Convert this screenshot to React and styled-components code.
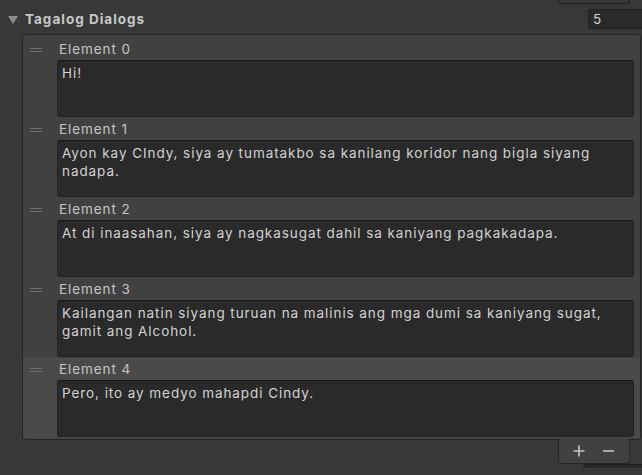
import styled, { createGlobalStyle } from "styled-components";

const GlobalStyle = createGlobalStyle`
  html, body {
    margin: 0;
    padding: 0;
    background: #383838;
    overflow: hidden;
  }
  body {
    font-family: Inter, "Noto Sans", sans-serif;
    font-size: 13.5px;
    letter-spacing: 0.93px;
    color: #d2d2d2;
  }
`;

const Page = styled.div`
  width: 642px;
  height: 475px;
  display: flex;
  flex-direction: column;
`;

const EdgeField = styled.div`
  align-self: flex-start;
  margin-left: ${(p) => p.left}px;
  width: ${(p) => p.width}px;
  height: 3px;
  border: 1px solid #212121;
  border-top: ${(p) => (p.top ? "1px solid #212121" : "none")};
  border-bottom: ${(p) => (p.top ? "none" : "1px solid #212121")};
  border-radius: ${(p) => (p.top ? "3px 3px 0 0" : "0 0 3px 3px")};
  background: ${(p) => (p.top ? "#2a2a2a" : "#383838")};
`;

const Header = styled.div`
  display: flex;
  align-items: center;
  height: 22px;
  margin-top: 4px;
  padding-left: 8px;
`;

const Foldout = styled.span`
  width: 0;
  height: 0;
  border-left: 5px solid transparent;
  border-right: 5px solid transparent;
  border-top: 8px solid #8d8d8d;
  margin-right: 7px;
  margin-top: 1px;
`;

const Title = styled.span`
  font-weight: 700;
  color: #c8c8c8;
  letter-spacing: 1px;
  flex: 1;
`;

const CountField = styled.div`
  width: 54px;
  height: 20px;
  box-sizing: border-box;
  background: #2a2a2a;
  border: 1px solid #212121;
  border-right: none;
  border-radius: 3px 0 0 3px;
  padding-left: 4px;
  line-height: 19px;
  color: #d2d2d2;
`;

const Panel = styled.div`
  margin: 4px 1px 0 22px;
  background: #414141;
  border: 1px solid #252525;
  border-radius: 3px;
  padding: 3px 0 1px;
`;

const Row = styled.div`
  display: flex;
  height: 80px;
  background: ${(p) => (p.selected ? "#4a4a4a" : "transparent")};
`;

const Handle = styled.div`
  width: 34px;
  flex-shrink: 0;
  position: relative;
  &::before,
  &::after {
    content: "";
    position: absolute;
    left: 7px;
    width: 12px;
    height: 1px;
    background: #6f6f6f;
  }
  &::before {
    top: 10px;
  }
  &::after {
    top: 13px;
  }
`;

const Body = styled.div`
  flex: 1;
  display: flex;
  flex-direction: column;
  padding-right: 6px;
`;

const Label = styled.div`
  height: 22px;
  line-height: 23px;
  padding-left: 2px;
  color: #c4c4c4;
`;

const TextBox = styled.div`
  height: 57px;
  box-sizing: border-box;
  background: #2a2a2a;
  border: 1px solid #212121;
  border-top-color: #161616;
  border-radius: 3px;
  padding: 3px 4px;
  line-height: 18px;
  color: #d2d2d2;
  overflow: hidden;
`;

const Footer = styled.div`
  align-self: flex-start;
  margin-left: 558px;
  width: 72px;
  height: 25px;
  box-sizing: border-box;
  background: #414141;
  border: 1px solid #252525;
  border-top: none;
  border-radius: 0 0 4px 4px;
  display: flex;
  align-items: center;
  justify-content: space-between;
  padding: 0 15px 0 14px;
  margin-top: -1px;
`;

const IconButton = styled.span`
  color: #c4c4c4;
  display: flex;
`;

const elements = [
  "Hi!",
  "Ayon kay CIndy, siya ay tumatakbo sa kanilang koridor nang bigla siyang nadapa.",
  "At di inaasahan, siya ay nagkasugat dahil sa kaniyang pagkakadapa.",
  "Kailangan natin siyang turuan na malinis ang mga dumi sa kaniyang sugat, gamit ang Alcohol.",
  "Pero, ito ay medyo mahapdi Cindy.",
];

export default function App() {
  return (
    <Page>
      <GlobalStyle />
      <EdgeField left={558} width={70} />
      <Header>
        <Foldout />
        <Title>Tagalog Dialogs</Title>
        <CountField>5</CountField>
      </Header>
      <Panel>
        {elements.map((text, i) => (
          <Row key={i} selected={i === 4}>
            <Handle />
            <Body>
              <Label>Element {i}</Label>
              <TextBox>{text}</TextBox>
            </Body>
          </Row>
        ))}
      </Panel>
      <Footer>
        <IconButton>
          <svg width="12" height="12" viewBox="0 0 12 12">
            <path d="M6 0.5v11M0.5 6h11" stroke="currentColor" strokeWidth="1.6" />
          </svg>
        </IconButton>
        <IconButton>
          <svg width="11" height="12" viewBox="0 0 11 12">
            <path d="M0 6h11" stroke="currentColor" strokeWidth="1.6" />
          </svg>
        </IconButton>
      </Footer>
      <EdgeField top left={583} width={60} />
    </Page>
  );
}
